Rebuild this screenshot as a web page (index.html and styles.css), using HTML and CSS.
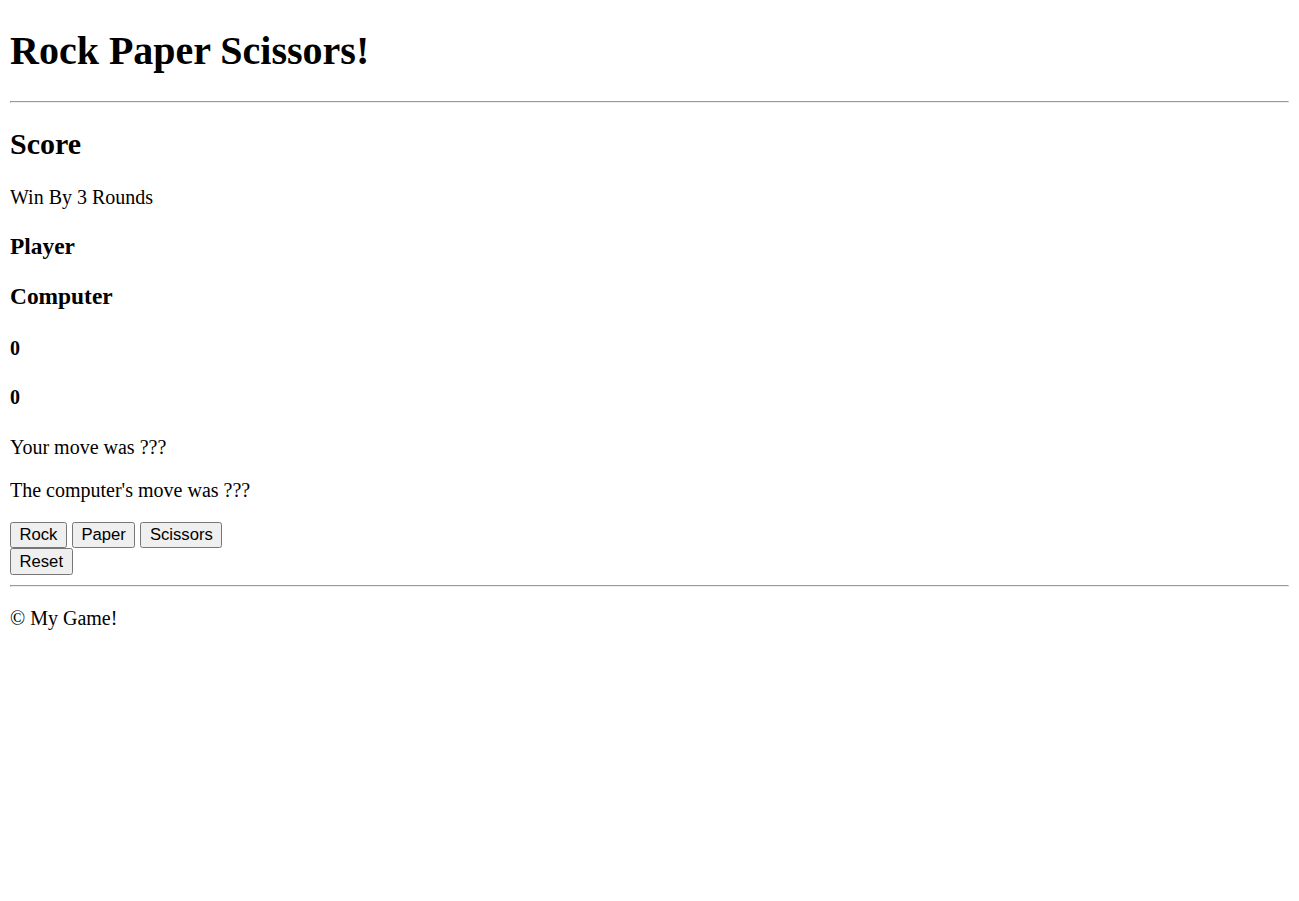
FILE: index.html
```html
<!DOCTYPE html>
<html class="page">
<head>
<meta charset="utf-8">
<title>Rock Paper Scissors</title>
<link rel="stylesheet" href="styles.css">
</head>
<body class="body">
<header>
<h1 class="title">Rock Paper Scissors!</h1>
</header>
<hr class="rule">
<main>
<h2 class="heading">Score</h2>
<p class="text">Win By 3 Rounds</p>
<h3 class="label">Player</h3>
<h3 class="label">Computer</h3>
<h4 class="score">0</h4>
<h4 class="score">0</h4>
<p class="text">Your move was ???</p>
<p class="text">The computer's move was ???</p>
<div class="moves">
<button class="btn">Rock</button>
<button class="btn">Paper</button>
<button class="btn">Scissors</button>
</div>
<div class="moves">
<button class="btn">Reset</button>
</div>
</main>
<hr class="rule">
<footer>
<p class="text">&copy; My Game!</p>
</footer>
</body>
</html>
```
FILE: styles.css
```css
.page {
  zoom: 1.25;
}
.body {
  margin: 8px;
  font-family: "Liberation Serif", "Times New Roman", serif;
  color: #000;
  background: #fff;
}
.title {
  margin-top: 13.44px;
}
.btn {
  font-family: "Liberation Sans", Arial, sans-serif;
  font-size: 13.3333px;
}
```
